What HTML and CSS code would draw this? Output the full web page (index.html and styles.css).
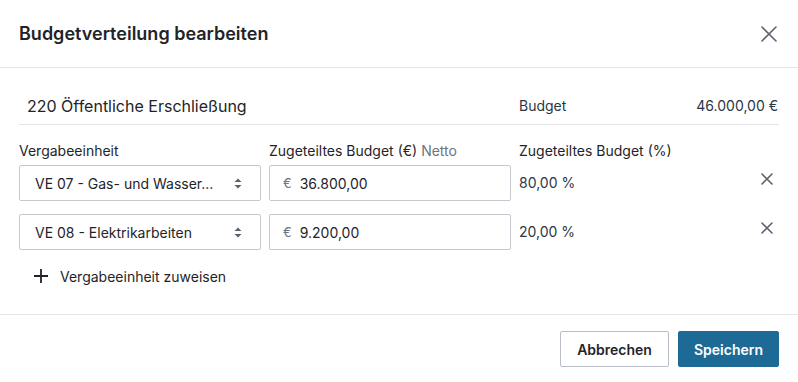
FILE: index.html
```html
<!DOCTYPE html>
<html lang="de">
<head>
  <meta charset="UTF-8">
  <meta name="viewport" content="width=device-width, initial-scale=1.0">
  <title>Budgetverteilung bearbeiten</title>
  <link rel="stylesheet" href="styles.css">
</head>
<body>

<!-- Dialog -->
<div class="dialog">
  <div class="dialog-header">
    <h2 class="dialog-title">Budgetverteilung bearbeiten</h2>
    <button class="icon-btn close-btn" aria-label="Schließen">
      <svg width="16" height="16" viewBox="0 0 16 16"><path d="M1 1L15 15M15 1L1 15" stroke="currentColor" stroke-width="1.6" fill="none" stroke-linecap="round"/></svg>
    </button>
  </div>

  <div class="dialog-body">
    <div class="summary">
      <span class="summary-name">220 Öffentliche Erschließung</span>
      <span class="summary-label">Budget</span>
      <span class="summary-value">46.000,00 €</span>
    </div>

    <div class="alloc-grid">
      <label class="field-label">Vergabeeinheit</label>
      <label class="field-label">Zugeteiltes Budget (€) <span class="muted">Netto</span></label>
      <label class="field-label">Zugeteiltes Budget (%)</label>
      <span></span>

      <div class="select">
        <span class="select-text">VE 07 - Gas- und Wasser...</span>
        <svg class="select-arrows" width="8" height="11" viewBox="0 0 8 11"><path d="M4 0.5L7.5 4H0.5Z M4 10.5L0.5 7H7.5Z" fill="currentColor"/></svg>
      </div>
      <div class="money-input"><span class="currency">€</span><span>36.800,00</span></div>
      <div class="percent">80,00 %</div>
      <button class="icon-btn remove-btn" aria-label="Entfernen">
        <svg width="12" height="12" viewBox="0 0 12 12"><path d="M1 1L11 11M11 1L1 11" stroke="currentColor" stroke-width="1.6" fill="none" stroke-linecap="round"/></svg>
      </button>

      <div class="select">
        <span class="select-text">VE 08 - Elektrikarbeiten</span>
        <svg class="select-arrows" width="8" height="11" viewBox="0 0 8 11"><path d="M4 0.5L7.5 4H0.5Z M4 10.5L0.5 7H7.5Z" fill="currentColor"/></svg>
      </div>
      <div class="money-input"><span class="currency">€</span><span>9.200,00</span></div>
      <div class="percent">20,00 %</div>
      <button class="icon-btn remove-btn" aria-label="Entfernen">
        <svg width="12" height="12" viewBox="0 0 12 12"><path d="M1 1L11 11M11 1L1 11" stroke="currentColor" stroke-width="1.6" fill="none" stroke-linecap="round"/></svg>
      </button>
    </div>

    <button class="add-btn">
      <svg width="14" height="14" viewBox="0 0 14 14"><path d="M7 0V14M0 7H14" stroke="currentColor" stroke-width="1.8" fill="none"/></svg>
      Vergabeeinheit zuweisen
    </button>
  </div>

  <div class="dialog-footer">
    <button class="btn btn-secondary">Abbrechen</button>
    <button class="btn btn-primary">Speichern</button>
  </div>
</div>

</body>
</html>
```

FILE: styles.css
```css
/* --- Dialog --- */
body {
  margin: 0;
  background: #fff;
  font-family: Inter, "Noto Sans", sans-serif;
  color: #1f2429;
}

.dialog {
  width: 798px;
  height: 382px;
  box-sizing: border-box;
}

.dialog-header {
  height: 67px;
  display: flex;
  align-items: center;
  justify-content: space-between;
  padding: 0 21px 0 19px;
  border-bottom: 1px solid #e6e6e6;
}

.dialog-title {
  margin: 0;
  font-size: 18px;
  font-weight: 600;
}

.icon-btn {
  background: none;
  border: none;
  padding: 0;
  cursor: pointer;
  color: #5b646e;
  display: flex;
  align-items: center;
  justify-content: center;
}

.close-btn {
  width: 16px;
  height: 16px;
}

.dialog-body {
  padding: 26px 19px 20px;
}

/* summary row */
.summary {
  display: grid;
  grid-template-columns: 492px 1fr auto;
  column-gap: 8px;
  align-items: center;
  padding: 0 1px 6px 0;
  border-bottom: 1px solid #e6e6e6;
  line-height: 24px;
}

.summary-name {
  padding-left: 8px;
  font-size: 16px;
}

.summary-label,
.summary-value {
  font-size: 14px;
  color: #2b3644;
}

/* allocation rows */
.alloc-grid {
  display: grid;
  grid-template-columns: 242px 242px 1fr 24px;
  column-gap: 8px;
  row-gap: 13px;
  margin-top: 16px;
  align-items: center;
}

.field-label {
  font-size: 14px;
  line-height: 20px;
  margin-bottom: -9px;
  color: #1f2429;
}

.muted {
  color: #6b7480;
}

.select,
.money-input {
  height: 36px;
  box-sizing: border-box;
  border: 1px solid #c4c8cf;
  border-radius: 2px;
  display: flex;
  align-items: center;
  font-size: 14px;
  background: #fff;
}

.select {
  padding: 0 18px 0 15px;
  gap: 12px;
}

.select-text {
  flex: 1;
  white-space: nowrap;
}

.select-arrows {
  color: #5b646e;
  flex-shrink: 0;
}

.money-input {
  padding: 0 13px;
  gap: 8px;
}

.currency {
  color: #6b7480;
  font-size: 13px;
}

.percent {
  font-size: 14px;
  color: #2b3644;
  padding-bottom: 2px;
}

.remove-btn {
  width: 24px;
  height: 24px;
  align-self: start;
  margin-top: 2px;
}

.add-btn {
  margin-top: 8px;
  height: 36px;
  display: flex;
  align-items: center;
  gap: 12px;
  padding: 0 0 0 15px;
  background: none;
  border: none;
  font-family: inherit;
  font-size: 14px;
  color: #1f2429;
  cursor: pointer;
}

/* footer */
.dialog-footer {
  border-top: 1px solid #e6e6e6;
  padding: 16px 19px 15px;
  display: flex;
  justify-content: flex-end;
  gap: 9px;
}

.btn {
  height: 36px;
  padding: 0 16px;
  font-family: inherit;
  font-size: 14px;
  font-weight: 600;
  border-radius: 2px;
  cursor: pointer;
}

.btn-secondary {
  background: #fff;
  border: 1px solid #b8bdc8;
  color: #1f2429;
}

.btn-primary {
  padding: 0 15px;
  background: #1e6a96;
  border: 1px solid #1e6a96;
  color: #fff;
}
```
